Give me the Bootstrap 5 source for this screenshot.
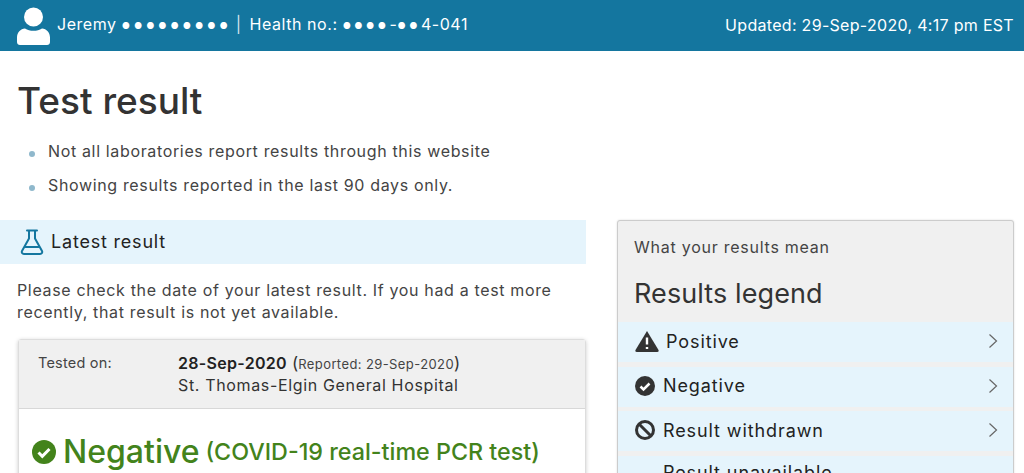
<!DOCTYPE html>
<html lang="en">
<head>
    <meta charset="UTF-8">
    <meta name="viewport" content="width=device-width, initial-scale=1.0">
    <title>Test result</title>
    <link href="https://cdn.jsdelivr.net/npm/bootstrap@5.3.0/dist/css/bootstrap.min.css" rel="stylesheet">
    <style>
        html, body { height: 473px; overflow: hidden; }
        body {
            font-family: "Inter", "Liberation Sans", sans-serif;
            color: #333;
            font-size: 16px;
            letter-spacing: .65px;
        }
        .top-bar {
            background: #14769f;
            color: #fff;
            height: 51px;
            padding: 0 10px 0 17px;
        }
        .top-bar .who { margin: 0 0 3px 7px; letter-spacing: .55px; }
        .top-bar .dots { font-size: 9px; letter-spacing: 3.500px; vertical-align: 1px; }
        .top-bar .dots-wide { letter-spacing: 4px; }
        .top-bar .sep { margin: 0 8px 0 4px; color: #d5e4ec; }
        .top-bar .updated { letter-spacing: .3px; margin-bottom: 1px; }
        .page-title {
            font-size: 37px;
            font-weight: 500;
            margin: 29px 0 0 17px;
            line-height: 42px;
            letter-spacing: 0;
        }
        .notes { margin: 19px 0 0 0; padding-left: 48px; list-style: none; }
        .notes li { position: relative; height: 34px; line-height: 20px; color: #444; }
        .notes li::before {
            content: "";
            position: absolute;
            left: -19px;
            top: 10px;
            width: 6px;
            height: 6px;
            border-radius: 50%;
            background: #8fb8cc;
        }
        .columns { margin-top: 11px; padding-right: 10px; gap: 31px; }
        .left-col { width: 586px; flex: none; }
        .right-col { flex: 1; }
        .band {
            background: #e5f4fc;
            height: 44px;
            padding: 0 0 2px 20px;
            font-size: 18px;
            letter-spacing: .8px;
            color: #222;
        }
        .band svg { margin: 2px 7px 0 0; }
        .intro { margin: 15px 24px 0 17px; line-height: 22px; color: #444; }
        .result-box {
            margin: 16px 0 0 18px;
            border: 1px solid #ddd;
            border-radius: 3px;
            box-shadow: 0 1px 4px rgba(0,0,0,.2);
        }
        .box-head {
            background: #f0f0f0;
            border-bottom: 1px solid #d8d8d8;
            height: 69px;
            padding: 12px 0 0 19px;
            line-height: 22px;
        }
        .box-head .lbl { width: 140px; flex: none; font-size: 14.500px; color: #444; letter-spacing: .2px; }
        .box-head .when { font-weight: 600; color: #222; letter-spacing: .3px; }
        .box-head .paren { font-size: 17px; letter-spacing: 0; }
        .box-head .rep { font-size: 13px; color: #444; letter-spacing: .4px; }
        .box-head .line { height: 22px; white-space: nowrap; }
        .box-body { padding: 19px 0 40px 13px; color: #43831b; letter-spacing: 0; }
        .box-body .big { font-size: 32px; font-weight: 500; margin-left: 7px; }
        .box-body .test { font-size: 23.300px; font-weight: 500; margin-left: 6px; }
        .legend {
            background: #f0f0f0;
            border: 1px solid #ccc;
            border-radius: 3px;
            box-shadow: 0 0 2px rgba(0,0,0,.15);
            height: 400px;
        }
        .legend-top { padding: 16px 16px 0; height: 101px; }
        .legend-top .sub { color: #444; letter-spacing: .75px; line-height: 20px; }
        .legend-top .name { font-size: 27px; margin-top: 21px; line-height: 32px; letter-spacing: .1px; color: #333; }
        .legend-row {
            background: #e5f4fc;
            height: 40px;
            margin-bottom: 4.500px;
            padding: 0 15px 2px 17px;
            font-size: 18px;
            letter-spacing: .9px;
            color: #222;
        }
        .legend-row .ico { margin-right: 8px; }
        .legend-row .ico-tri { margin-right: 7px; letter-spacing: .7px; }
        .legend-row.row-last { padding-bottom: 6px; }
    </style>
</head>
<body>
    <!-- Header bar -->
    <div class="top-bar d-flex align-items-center justify-content-between">
        <div class="d-flex align-items-center">
            <svg width="33" height="38" viewBox="0 0 33 38" fill="#fff">
                <circle cx="16.5" cy="10" r="9.5"/>
                <path d="M8 21.5c2.5 1.6 5.300 2.300 8.500 2.300s6-.7 8.500-2.300c4.500.3 8 4 8 9v4.500c0 1.700-1.300 3-3 3H3c-1.700 0-3-1.300-3-3v-4.500c0-5 3.500-8.700 8-9z"/>
            </svg>
            <span class="who">Jeremy <span class="dots dots-wide">●●●●●●●●●</span><span class="sep">|</span>Health no.: <span class="dots">●●●●</span>-<span class="dots">●●</span>4-041</span>
        </div>
        <span class="updated">Updated: 29-Sep-2020, 4:17 pm EST</span>
    </div>

    <h1 class="page-title">Test result</h1>
    <ul class="notes">
        <li>Not all laboratories report results through this website</li>
        <li>Showing results reported in the last 90 days only.</li>
    </ul>

    <div class="columns d-flex align-items-start">
        <div class="left-col">
            <div class="band d-flex align-items-center">
                <svg width="24" height="26" viewBox="0 0 24 26" fill="none" stroke="#14769f" stroke-width="2" stroke-linejoin="round" stroke-linecap="round">
                    <path d="M7 1.500h10M9 1.500v8L2 22c-.8 1.500.2 3 2 3h16c1.800 0 2.800-1.500 2-3L15 9.500v-8"/>
                    <path d="M5.500 18h13"/>
                </svg>
                Latest result
            </div>
            <p class="intro">Please check the date of your latest result. If you had a test more recently, that result is not yet available.</p>
            <div class="result-box">
                <div class="box-head d-flex">
                    <div class="lbl">Tested on:</div>
                    <div>
                        <div class="line"><span class="when">28-Sep-2020</span> <span class="paren">(</span><span class="rep">Reported: 29-Sep-2020</span><span class="paren">)</span></div>
                        <div class="line">St. Thomas-Elgin General Hospital</div>
                    </div>
                </div>
                <div class="box-body d-flex align-items-center">
                    <svg width="24" height="24" viewBox="0 0 24 24"><circle cx="12" cy="12" r="12" fill="#43831b"/><path d="M6.500 12.500l3.800 3.800 7.200-7.300" fill="none" stroke="#fff" stroke-width="3"/></svg>
                    <span class="big">Negative</span><span class="test">(COVID-19 real-time PCR test)</span>
                </div>
            </div>
        </div>

        <div class="right-col legend">
            <div class="legend-top">
                <div class="sub">What your results mean</div>
                <div class="name">Results legend</div>
            </div>
            <div class="legend-row d-flex align-items-center justify-content-between">
                <span class="d-flex align-items-center">
                    <svg class="ico-tri" width="24" height="22" viewBox="0 0 24 22"><path d="M12 1L.5 20c-.5 1 .1 2 1.200 2h20.600c1.100 0 1.700-1 1.200-2z" fill="#333"/><path d="M12 7.500v7M12 17v2" stroke="#fff" stroke-width="2.400"/></svg>
                    Positive
                </span>
                <svg width="10" height="16" viewBox="0 0 10 16" fill="none" stroke="#666" stroke-width="1.200"><path d="M1.500 1.500L8.500 8l-7 6.500"/></svg>
            </div>
            <div class="legend-row d-flex align-items-center justify-content-between">
                <span class="d-flex align-items-center">
                    <svg class="ico" width="20" height="20" viewBox="0 0 20 20"><circle cx="10" cy="10" r="10" fill="#333"/><path d="M5.500 10.500l3 3 6-6" fill="none" stroke="#fff" stroke-width="2.500"/></svg>
                    Negative
                </span>
                <svg width="10" height="16" viewBox="0 0 10 16" fill="none" stroke="#666" stroke-width="1.200"><path d="M1.500 1.500L8.500 8l-7 6.500"/></svg>
            </div>
            <div class="legend-row d-flex align-items-center justify-content-between">
                <span class="d-flex align-items-center">
                    <svg class="ico" width="20" height="20" viewBox="0 0 20 20" fill="none" stroke="#333" stroke-width="3"><circle cx="10" cy="10" r="8.500"/><path d="M4 4l12 12"/></svg>
                    Result withdrawn
                </span>
                <svg width="10" height="16" viewBox="0 0 10 16" fill="none" stroke="#666" stroke-width="1.200"><path d="M1.500 1.500L8.500 8l-7 6.500"/></svg>
            </div>
            <div class="legend-row row-last d-flex align-items-center justify-content-between">
                <span class="d-flex align-items-center">
                    <svg class="ico" width="20" height="20" viewBox="0 0 20 20"></svg>
                    Result unavailable
                </span>
            </div>
        </div>
    </div>
</body>
</html>
